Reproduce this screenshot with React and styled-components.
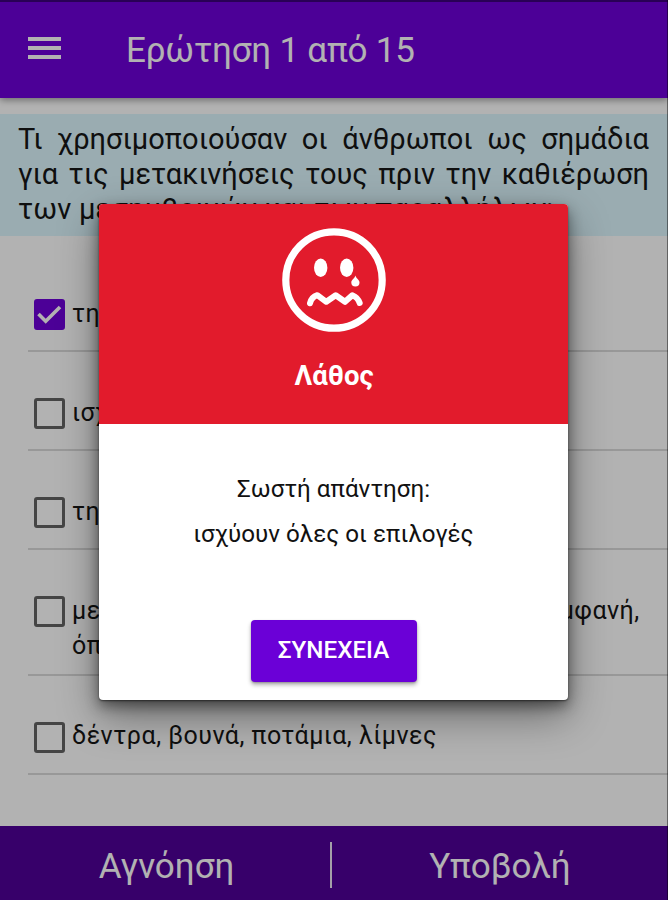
import React from "react";
import styled, { createGlobalStyle } from "styled-components";

const GlobalStyle = createGlobalStyle`
  *, *::before, *::after { box-sizing: border-box; }
  body { margin: 0; font-family: Roboto, "Noto Sans", sans-serif; }
  button { font-family: inherit; border: 0; background: none; padding: 0; margin: 0; color: inherit; }
`;

const Screen = styled.div`
  position: relative;
  display: flex;
  flex-direction: column;
  width: 668px;
  height: 900px;
  overflow: hidden;
  background: #ffffff;
  color: #161616;
`;

const TopBar = styled.header`
  display: flex;
  align-items: center;
  flex: none;
  height: 98px;
  padding: 2px 0 0 28px;
  background: #6d00d9;
  border-top: 2px solid #3c007c;
  color: #ffffff;
  box-shadow: 0 2px 7px rgba(0, 0, 0, 0.4);
`;

const MenuButton = styled.button`
  display: flex;
  flex-direction: column;
  gap: 5px;
  width: 33px;
  margin: -7px 65px 0 0;
`;

const MenuLine = styled.span`
  height: 4px;
  background: #ffffff;
`;

const Title = styled.h1`
  margin: 0;
  font-size: 35px;
  font-weight: 400;
  line-height: 44px;
  letter-spacing: -0.2px;
  white-space: nowrap;
`;

const Question = styled.section`
  flex: none;
  height: 122px;
  margin-top: 16px;
  padding: 8px 19px 0 18px;
  background: #ddf7fe;
  font-size: 29px;
  line-height: 35px;
`;

const QuestionLine = styled.p`
  margin: 0;
  white-space: nowrap;
  text-align: ${(p) => (p.$last ? "left" : "justify")};
  text-align-last: ${(p) => (p.$last ? "left" : "justify")};
  letter-spacing: ${(p) => (p.$last ? "0.2px" : "0")};
`;

const Answers = styled.ul`
  flex: 1;
  list-style: none;
  margin: 17px 0 0;
  padding: 0 0 0 28px;
`;

const Answer = styled.li`
  display: flex;
  align-items: flex-start;
  gap: 7px;
  height: ${(p) => (p.$tall ? 125.5 : 99)}px;
  padding: 46px 0 0 6px;
  border-bottom: 2px solid #dadada;
`;

const CheckBox = styled.span`
  display: flex;
  align-items: center;
  justify-content: center;
  flex: none;
  width: 31px;
  height: 31px;
  border: 3px solid ${(p) => (p.$checked ? "#6d00d9" : "#636363")};
  border-radius: 3px;
  background: ${(p) => (p.$checked ? "#6d00d9" : "transparent")};
`;

const AnswerText = styled.span`
  margin-top: -3.5px;
  font-size: 25px;
  line-height: 35px;
  letter-spacing: 0.48px;
  white-space: pre;
`;

const BottomBar = styled.footer`
  display: grid;
  grid-template-columns: 330px 2px 1fr;
  align-items: center;
  flex: none;
  height: 74px;
  padding-top: 4px;
  background: #4f0099;
  color: #ffffff;
`;

const BarAction = styled.button`
  padding: 3px 0 0 ${(p) => p.$shift || 0}px;
  font-size: 35px;
  line-height: 44px;
`;

const Divider = styled.span`
  height: 46px;
  background: #ebe4f2;
`;

const Overlay = styled.div`
  position: absolute;
  inset: 0;
  display: flex;
  align-items: flex-start;
  justify-content: center;
  padding-top: 204px;
  background: rgba(0, 0, 0, 0.3);
  border-right: 1px solid rgba(0, 0, 0, 0.45);
`;

const Dialog = styled.div`
  display: flex;
  flex-direction: column;
  width: 469px;
  height: 496px;
  border-radius: 4px;
  overflow: hidden;
  background: #ffffff;
  color: #111111;
  box-shadow: 0 16px 40px rgba(0, 0, 0, 0.4), 0 6px 14px rgba(0, 0, 0, 0.45), 0 1px 2px rgba(0, 0, 0, 0.5);
`;

const DialogHead = styled.div`
  display: flex;
  flex-direction: column;
  align-items: center;
  flex: none;
  height: 220px;
  padding: 24px 0 0 1px;
  background: #e21b2c;
  color: #ffffff;
`;

const Verdict = styled.h2`
  margin: 27px 0 0;
  font-size: 27.5px;
  font-weight: 700;
  line-height: 34px;
`;

const DialogBody = styled.div`
  display: flex;
  flex-direction: column;
  align-items: center;
  padding-top: 43px;
  font-size: 24.2px;
  line-height: 45px;
`;

const BodyLine = styled.p`
  margin: 0;
`;

const Continue = styled.button`
  width: 166px;
  height: 62px;
  margin-top: 63px;
  border-radius: 4px;
  background: #6b00d7;
  color: #ffffff;
  font-size: 24.2px;
  font-weight: 500;
  line-height: 58px;
  padding-bottom: 2px;
  box-shadow: 0 3px 4px rgba(0, 0, 0, 0.3), 0 1px 2px rgba(0, 0, 0, 0.2);
`;

const SadFace = () => (
  <svg width="104" height="104" viewBox="0 0 104 104" fill="none">
    <circle cx="52" cy="52" r="48.2" stroke="#fff" strokeWidth="7.2" />
    <ellipse cx="38.7" cy="39.7" rx="6.7" ry="9.2" fill="#fff" />
    <ellipse cx="64.7" cy="39.7" rx="6.7" ry="9.2" fill="#fff" />
    <path d="M73.4 47.500C74.500 51 77.500 51.500 77.500 54.500a4.100 4.100 0 0 1-8.200 0C69.300 51.500 72.300 51 73.400 47.500Z" fill="#fff" />
    <path
      d="M28 75.300Q29.500 69 35.300 67.200L44.300 73.800L53.700 67.200L63 73.800L70.300 67.200Q76 69.500 77.700 75"
      stroke="#fff"
      strokeWidth="6"
      strokeLinecap="round"
      strokeLinejoin="round"
    />
  </svg>
);

const Tick = () => (
  <svg width="25" height="25" viewBox="0 0 25 25" fill="none">
    <path d="M1.500 12L8.700 19.200L23 5" stroke="#fff" strokeWidth="3.600" />
  </svg>
);

const answers = [
  { text: "την Πούλια", checked: true },
  { text: "ισχύουν όλες οι επιλογές" },
  { text: "την Σελήνη" },
  { text: "με σταθερά σημεία που ήταν μόνιμα και εμφανή,\nόπως βράχια", tall: true },
  { text: "δέντρα, βουνά, ποτάμια, λίμνες" },
];

export default function App() {
  return (
    <Screen>
      <GlobalStyle />
      <TopBar>
        <MenuButton aria-label="Μενού">
          <MenuLine />
          <MenuLine />
          <MenuLine />
        </MenuButton>
        <Title>Ερώτηση 1 από 15</Title>
      </TopBar>
      <Question>
        <QuestionLine>Τι χρησιμοποιούσαν οι άνθρωποι ως σημάδια</QuestionLine>
        <QuestionLine>για τις μετακινήσεις τους πριν την καθιέρωση</QuestionLine>
        <QuestionLine $last>των μεσημβρινών και των παραλλήλων;</QuestionLine>
      </Question>
      <Answers>
        {answers.map((a) => (
          <Answer key={a.text} $tall={a.tall}>
            <CheckBox $checked={a.checked}>{a.checked && <Tick />}</CheckBox>
            <AnswerText>{a.text}</AnswerText>
          </Answer>
        ))}
      </Answers>
      <BottomBar>
        <BarAction $shift={3}>Αγνόηση</BarAction>
        <Divider />
        <BarAction>Υποβολή</BarAction>
      </BottomBar>
      <Overlay>
        <Dialog role="dialog">
          <DialogHead>
            <SadFace />
            <Verdict>Λάθος</Verdict>
          </DialogHead>
          <DialogBody>
            <BodyLine>Σωστή απάντηση:</BodyLine>
            <BodyLine>ισχύουν όλες οι επιλογές</BodyLine>
            <Continue>ΣΥΝΕΧΕΙΑ</Continue>
          </DialogBody>
        </Dialog>
      </Overlay>
    </Screen>
  );
}
